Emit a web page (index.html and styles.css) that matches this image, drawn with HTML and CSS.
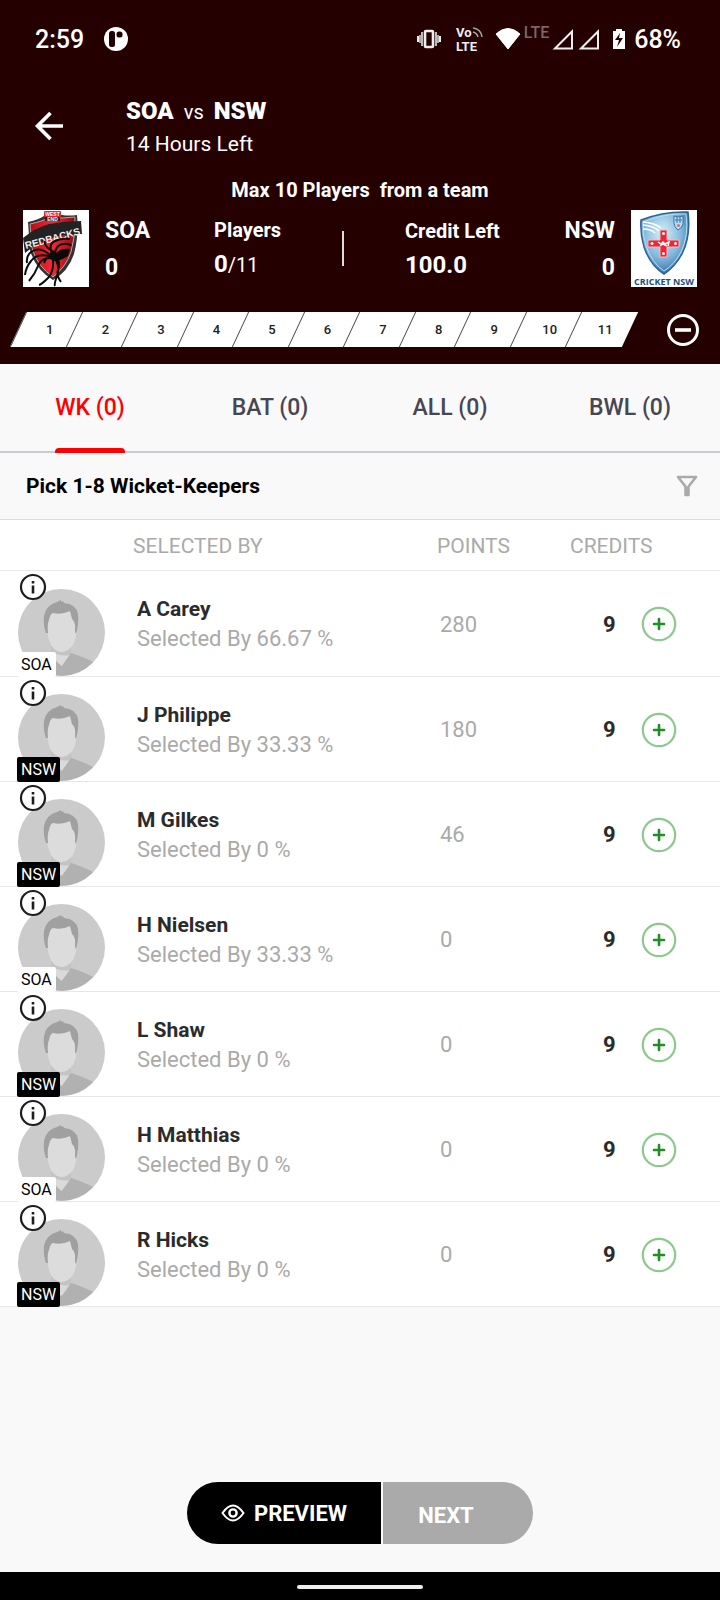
FILE: index.html
```
<!DOCTYPE html>
<html lang="en">
<head>
<meta charset="utf-8">
<meta name="viewport" content="width=device-width, initial-scale=1">
<title>SOA vs NSW</title>
<link rel="stylesheet" href="styles.css">
</head>
<body>
<svg class="sprite" aria-hidden="true">
  <symbol id="avatar" viewBox="0 0 87 87">
    <circle cx="43.500" cy="43.500" r="43.500" fill="#cbcbcb"/>
    <path d="M33 56h20v12l-9 12-11-13z" fill="#dadada"/>
    <path d="M33 57h20v9q-9 2-20-3z" fill="#c4c4c4"/>
    <path d="M33 65Q25 68 13 74.500A43.500 43.500 0 0 0 75 73Q66 68 53 64Q49 70 43.700 77Q36 71 33 65z" fill="#b1b1b1"/>
    <path d="M29 36Q29 21 43 21Q59 21 59 36Q59 48 55 56Q50 63 43.500 63Q37 63 33 56Q29 48 29 36z" fill="#dcdcdc"/>
    <path d="M28 44Q25 36 26 27Q28 16 39 13L43 11L43 13L45 12L46 14Q58 15 60 25Q61 34 58 45L57 43Q58 33 54 30L52 22Q44 26 35 24Q32 25 31 31Q29 35 30 44z" fill="#a0a0a0"/>
  </symbol>
  <symbol id="info" viewBox="0 0 28 28">
    <circle cx="14" cy="14" r="12" fill="#fff" stroke="#1d1d1d" stroke-width="2.200"/>
    <path d="M14 8v2.500M14 12.500v8" stroke="#1d1d1d" stroke-width="2.600"/>
  </symbol>
  <symbol id="add" viewBox="0 0 36 36">
    <circle cx="18" cy="18" r="16.200" fill="none" stroke="#8bc98d" stroke-width="2.200"/>
    <path d="M18 13v10M13 18h10" stroke="#1f8f24" stroke-width="2.600" stroke-linecap="round"/>
  </symbol>
</svg>

<header class="top">
  <div class="status">
    <span class="clock">2:59</span>
    <svg class="app-dot" width="26" height="26" viewBox="0 0 26 26"><circle cx="13" cy="13" r="12" fill="#fff"/><rect x="6" y="5" width="6" height="16" rx="2.500" fill="#250000"/><rect x="13.500" y="5.500" width="6" height="6" rx="2.500" fill="#250000"/></svg>
    <svg class="vibrate" width="26" height="22" viewBox="0 0 26 22"><rect x="9" y="3" width="8" height="16" rx="1" fill="none" stroke="#eee" stroke-width="2.600"/><path d="M6 4v14M20 4v14" stroke="#bbb" stroke-width="2"/><path d="M4 7v8M22 7v8" stroke="#aaa" stroke-width="2"/><path d="M2 8v6M24 8v6" stroke="#eee" stroke-width="2"/></svg>
    <svg class="volte" width="30" height="28" viewBox="0 0 30 28"><text x="1" y="12" class="net">Vo</text><text x="1" y="26" class="net">LTE</text><path d="M18 3q8 1 9 9M18 7q4 1 5 5" fill="none" stroke="#aaa" stroke-width="1.500"/></svg>
    <svg class="wifi" width="26" height="22" viewBox="0 0 26 22"><path d="M13 21L1 6q12-11 24 0z" fill="#fff" stroke="#fff" stroke-linejoin="round"/></svg>
    <span class="lte">LTE</span>
    <svg class="signal" width="50" height="24" viewBox="0 0 50 24"><path d="M4 21.500L21 4.500v17zM30 21.500L47 4.500v17z" fill="none" stroke="#eee" stroke-width="2"/></svg>
    <svg class="battery" width="14" height="22" viewBox="0 0 14 22"><path d="M1 3h3V1h6v2h3v18H1z" fill="#fff"/><path d="M8 5L3 12h4l-2 7 6-9H7z" fill="#250000"/></svg>
    <span class="percent">68%</span>
  </div>

  <div class="title-row">
    <button class="back" aria-label="Back"><svg width="30" height="30" viewBox="0 0 30 30"><path d="M29 15H4M16.500 2L3.500 15 16.500 28" fill="none" stroke="#fff" stroke-width="3.600"/></svg></button>
    <div>
      <h1 class="match"><b>SOA</b><span>vs</span><b>NSW</b></h1>
      <p class="left">14 Hours Left</p>
    </div>
  </div>

  <p class="limit">Max 10 Players&nbsp; from a team</p>

  <div class="summary">
    <svg class="crest" viewBox="0 0 66 77" role="img" aria-label="Redbacks">
      <defs><linearGradient id="red" x1="0" x2="1"><stop offset="0" stop-color="#b80d16"/><stop offset=".5" stop-color="#f22a35"/><stop offset="1" stop-color="#8f0a10"/></linearGradient></defs>
      <rect width="66" height="77" fill="#fff"/>
      <path d="M5 12Q18 9 22 5h17q7 1 15 0q2 20-3 39q-6 18-21 26Q12 59 7 40z" fill="#333"/>
      <path d="M7 14q14-3 20-7q12 2 25 0q1 18-4 35-5 15-18 25Q14 56 9 38z" fill="url(#red)" stroke="#aaa"/>
      <path d="M0 28Q12 18 26 14q16-3 32-3l1 13q-20 0-33 5T2 43z" fill="#222"/>
      <text x="3" y="39" class="crest-name" transform="rotate(-15 3 39)">REDBACKS</text>
      <rect x="21" y="1" width="17" height="6" rx="1" fill="#e31f2b"/><rect x="22" y="7" width="15" height="4" fill="#222"/>
      <text x="29.500" y="6" class="crest-tag">WEST</text><text x="29.500" y="11" class="crest-tag">END</text>
      <path d="M24 45q5-4 9-2q5-5 14-4l-2 7q-6 4-11 5q-6 1-10-6z" fill="#0a0a0a"/>
      <path d="M26 44Q16 36 8 42 3 46 4 53M26 46Q14 43 8 51 3 57 2 65M27 48Q18 48 15 56T6 71M30 50Q31 62 25 68T16 75M33 50Q37 58 34 66T32 76M35 49Q37 55 35 60T38 72M29 44Q25 34 32 31T47 29M32 43Q33 35 40 34T48 36M31 42Q20 36 22 31M23 49l-2 4" fill="none" stroke="#0a0a0a" stroke-width="2"/>
    </svg>
    <div class="team"><b>SOA</b><b>0</b></div>
    <div class="stat"><span class="stat-label">Players</span><span class="stat-value">0<small>/11</small></span></div>
    <i class="divider"></i>
    <div class="stat credit"><span class="stat-label">Credit Left</span><span class="stat-value">100.0</span></div>
    <div class="team away"><b>NSW</b><b>0</b></div>
    <svg class="crest" viewBox="0 0 66 77" role="img" aria-label="Cricket NSW">
      <defs><radialGradient id="sky" cx=".45" cy=".35" r=".7"><stop offset="0" stop-color="#d9f1f8"/><stop offset=".55" stop-color="#84b9dc"/><stop offset="1" stop-color="#2b68a8"/></radialGradient></defs>
      <rect width="66" height="77" fill="#fff"/>
      <path d="M10 10Q33 1 57 2 60 26 51 44 44 57 33 64 19 55 13 37 9 24 10 10z" fill="url(#sky)" stroke="#2d629b" stroke-width="1.500"/>
      <path d="M12 12Q34 3 55 4q3 22-5 38-7 13-17 19Q21 53 15 36q-4-12-3-24z" fill="none" stroke="#b6e2ee"/>
      <path d="M12 12q12 1 18 6M12 15q11 1 16 6M12 19q8 0 12 4" fill="none" stroke="#fff" stroke-width="1.600"/>
      <path d="M43 6q5 2 9 0v8q-1 4-5 6-4-3-4-7z" fill="#b8dded" stroke="#3b72ae"/><path d="M44 10h7M46 7v6M49 7v6" stroke="#3b72ae"/><circle cx="47.500" cy="15.500" r="1.600" fill="#e76a70"/>
      <path d="M29 20h7v10h12v7H36v10h-7V37H17v-7h12z" fill="#ec2736" stroke="#f7b9c1"/>
      <g fill="#fff"><circle cx="32.500" cy="23.500" r="1.500"/><circle cx="32.500" cy="43.500" r="1.500"/><circle cx="21" cy="33.500" r="1.500"/><circle cx="44.500" cy="33.500" r="1.500"/></g>
      <path d="M27 32l3 2 2-2 2 2 4-2-1 4M29 36l3-2 4 2" fill="none" stroke="#fff" stroke-width="1.500"/>
      <text x="33" y="75" class="crest-foot">CRICKET NSW</text>
    </svg>
  </div>

  <div class="progress">
    <ol class="steps"><li>1</li><li>2</li><li>3</li><li>4</li><li>5</li><li>6</li><li>7</li><li>8</li><li>9</li><li>10</li><li>11</li></ol>
    <button class="clear" aria-label="Clear team"><svg width="32" height="32" viewBox="0 0 32 32"><circle cx="16" cy="16" r="14.500" fill="none" stroke="#fff" stroke-width="3"/><path d="M8 16h16" stroke="#fff" stroke-width="3.600"/></svg></button>
  </div>
</header>

<nav class="tabs">
  <button class="tab active">WK (0)</button>
  <button class="tab">BAT (0)</button>
  <button class="tab">ALL (0)</button>
  <button class="tab">BWL (0)</button>
</nav>

<main>
  <div class="pick">
    <h2>Pick 1-8 Wicket-Keepers</h2>
    <button class="filter" aria-label="Filter"><svg width="22" height="22" viewBox="0 0 22 22"><path d="M2 2h18l-7.500 9.500V20h-3v-8.500z" fill="none" stroke="#aaa" stroke-width="2.600" stroke-linejoin="round"/><path d="M11 12v8" stroke="#aaa" stroke-width="3"/></svg></button>
  </div>

  <table class="players">
    <colgroup><col class="c-photo"><col class="c-name"><col class="c-points"><col class="c-credits"><col class="c-add"></colgroup>
    <thead><tr><td></td><th>SELECTED BY</th><th>POINTS</th><th colspan="2">CREDITS</th></tr></thead>
    <tbody>
      <tr>
        <td><div class="photo"><svg class="face"><use href="#avatar"/></svg><button class="info" aria-label="About A Carey"><svg><use href="#info"/></svg></button><span class="tag">SOA</span></div></td>
        <td><strong>A Carey</strong><span class="by">Selected By 66.67 %</span></td><td class="points">280</td><td class="credits">9</td>
        <td><button class="add" aria-label="Add A Carey"><svg><use href="#add"/></svg></button></td>
      </tr>
      <tr>
        <td><div class="photo"><svg class="face"><use href="#avatar"/></svg><button class="info" aria-label="About J Philippe"><svg><use href="#info"/></svg></button><span class="tag dark">NSW</span></div></td>
        <td><strong>J Philippe</strong><span class="by">Selected By 33.33 %</span></td><td class="points">180</td><td class="credits">9</td>
        <td><button class="add" aria-label="Add J Philippe"><svg><use href="#add"/></svg></button></td>
      </tr>
      <tr>
        <td><div class="photo"><svg class="face"><use href="#avatar"/></svg><button class="info" aria-label="About M Gilkes"><svg><use href="#info"/></svg></button><span class="tag dark">NSW</span></div></td>
        <td><strong>M Gilkes</strong><span class="by">Selected By 0 %</span></td><td class="points">46</td><td class="credits">9</td>
        <td><button class="add" aria-label="Add M Gilkes"><svg><use href="#add"/></svg></button></td>
      </tr>
      <tr>
        <td><div class="photo"><svg class="face"><use href="#avatar"/></svg><button class="info" aria-label="About H Nielsen"><svg><use href="#info"/></svg></button><span class="tag">SOA</span></div></td>
        <td><strong>H Nielsen</strong><span class="by">Selected By 33.33 %</span></td><td class="points">0</td><td class="credits">9</td>
        <td><button class="add" aria-label="Add H Nielsen"><svg><use href="#add"/></svg></button></td>
      </tr>
      <tr>
        <td><div class="photo"><svg class="face"><use href="#avatar"/></svg><button class="info" aria-label="About L Shaw"><svg><use href="#info"/></svg></button><span class="tag dark">NSW</span></div></td>
        <td><strong>L Shaw</strong><span class="by">Selected By 0 %</span></td><td class="points">0</td><td class="credits">9</td>
        <td><button class="add" aria-label="Add L Shaw"><svg><use href="#add"/></svg></button></td>
      </tr>
      <tr>
        <td><div class="photo"><svg class="face"><use href="#avatar"/></svg><button class="info" aria-label="About H Matthias"><svg><use href="#info"/></svg></button><span class="tag">SOA</span></div></td>
        <td><strong>H Matthias</strong><span class="by">Selected By 0 %</span></td><td class="points">0</td><td class="credits">9</td>
        <td><button class="add" aria-label="Add H Matthias"><svg><use href="#add"/></svg></button></td>
      </tr>
      <tr>
        <td><div class="photo"><svg class="face"><use href="#avatar"/></svg><button class="info" aria-label="About R Hicks"><svg><use href="#info"/></svg></button><span class="tag dark">NSW</span></div></td>
        <td><strong>R Hicks</strong><span class="by">Selected By 0 %</span></td><td class="points">0</td><td class="credits">9</td>
        <td><button class="add" aria-label="Add R Hicks"><svg><use href="#add"/></svg></button></td>
      </tr>
    </tbody>
  </table>
</main>

<div class="actions">
  <button class="preview"><svg width="24" height="18" viewBox="0 0 24 18"><path d="M1.500 9Q12-6 22.500 9 12 24 1.500 9z" fill="none" stroke="#fff" stroke-width="2"/><circle cx="12" cy="9" r="3.600" fill="none" stroke="#fff" stroke-width="2.400"/></svg>PREVIEW</button>
  <button class="next">NEXT</button>
</div>
<footer class="gesture"><i></i></footer>
</body>
</html>
```
FILE: styles.css
```
* { box-sizing: border-box; }
body {
  margin: 0;
  min-height: 100vh;
  display: flex;
  flex-direction: column;
  background: #f9f9f9;
  color: #2b2b2b;
  font-family: Roboto, "Liberation Sans", sans-serif;
  font-size: 22px;
}
button { border: 0; padding: 0; background: none; color: inherit; font: inherit; }
svg { display: block; }
h1, h2, p, ol { margin: 0; padding: 0; }
.sprite { position: absolute; width: 0; height: 0; }

.top { background: #250000; color: #fff; padding-bottom: 17px; }
.status { display: flex; align-items: center; height: 78px; padding: 0 39px 0 35px; font-size: 25px; font-weight: 500; }
.app-dot { margin-left: 19px; margin-right: auto; }
.volte { margin-left: 13px; }
.net { font-size: 13px; font-weight: 700; fill: #eee; }
.wifi { margin-left: 10px; }
.lte { align-self: flex-start; margin: 24px 2px 0 3px; font-size: 16px; line-height: 18px; color: #7c6666; }
.battery { margin: 0 8px 0 11px; }

.title-row { display: flex; align-items: center; height: 96px; padding: 0 34px; gap: 62px; }
.match { display: flex; align-items: baseline; gap: 10px; padding-top: 2px; font-size: 24px; line-height: 32px; font-weight: 700; }
.match span { font-size: 20px; font-weight: 400; }
.left { font-size: 21px; line-height: 32px; }
.limit { text-align: center; font-size: 20px; line-height: 32px; font-weight: 700; }

.summary { display: grid; grid-template-columns: 66px 93fr 112fr 2px 148fr 91fr 66px; column-gap: 16px; align-items: center; padding: 4px 23px 0; }
.crest { width: 66px; height: 77px; }
.crest-name { font: 700 10px "Liberation Sans", sans-serif; fill: #eee; }
.crest-tag { font: 700 5px "Liberation Sans", sans-serif; fill: #fff; text-anchor: middle; }
.crest-foot { font: 700 9px "Open Sans", sans-serif; fill: #234c86; text-anchor: middle; }
.team { display: flex; flex-direction: column; font-size: 23px; line-height: 37px; }
.away { text-align: right; }
.stat { display: flex; flex-direction: column; line-height: 36px; font-weight: 700; white-space: nowrap; }
.credit { padding-left: 45px; }
.stat-label { font-size: 20px; line-height: 32px; }
.stat-value { font-size: 24px; }
.stat-value small { font-size: 20px; font-weight: 400; }
.divider { height: 35px; background: #ddd; }

.progress { display: flex; align-items: center; justify-content: space-between; padding: 25px 21px 0 18px; }
.steps { display: flex; flex: 1; margin-right: 38px; list-style: none; }
.steps li { position: relative; z-index: 0; flex: 1; padding-left: 8px; text-align: center; font-size: 13px; line-height: 35px; font-weight: 500; color: #222; }
.steps li::before { content: ""; position: absolute; z-index: -1; inset: 0 -1px 0 0; background: #fff; border-left: 1px solid #444; transform: skewX(-25deg); }

.tabs { display: flex; border-bottom: 2px solid #cac8d2; }
.tab { position: relative; flex: 1; height: 87px; font-size: 23px; font-weight: 500; color: #484650; }
.active { color: #f00; }
.active::after { content: ""; position: absolute; left: 55px; right: 55px; bottom: -2px; height: 5px; border-radius: 4px 4px 0 0; background: #f00; }

.pick { display: flex; align-items: center; justify-content: space-between; height: 67px; padding: 0 22px 0 26px; border-bottom: 1px solid #ddd; }
.pick h2 { font-size: 21px; font-weight: 700; color: #000; }

.players { width: 100%; table-layout: fixed; border-collapse: collapse; background: #fff; }
.players td, .players th { padding: 2px 0 0; text-align: left; border-bottom: 1px solid #e6e6e6; }
.players th { height: 50px; font-size: 21px; font-weight: 400; color: #aaa; }
.c-photo { width: 133px; }
.c-points { width: 133px; }
.c-credits { width: 71px; }
.c-add { width: 79px; }
.players td:first-child { padding: 0; }
.photo { position: relative; height: 104px; padding: 17px 0 0 18px; }
.players tbody tr:first-child .photo { height: 105px; padding-top: 18px; }
.face { width: 87px; height: 87px; }
.info, .info svg { width: 28px; height: 28px; }
.info { position: absolute; left: 19px; top: 2px; }
.tag { position: absolute; left: 17px; bottom: -1px; padding: 0 4px; border-radius: 2px; background: #fff; color: #000; font-size: 16px; line-height: 25px; }
.dark { background: #000; color: #fff; }
.players strong, .by { display: block; padding-left: 4px; line-height: 29px; }
.players strong { font-size: 21px; font-weight: 700; }
.by { color: #aaa; }
.players .points { padding-left: 3px; color: #aaa; }
.players .credits { padding-left: 33px; font-weight: 700; }
.add, .add svg { display: block; width: 36px; height: 36px; }

.actions { display: grid; grid-template-columns: 194fr 150fr; align-self: center; gap: 2px; width: 346px; height: 62px; margin: auto 0 28px; border-radius: 31px; overflow: hidden; color: #fff; font-weight: 700; }
.preview { display: flex; align-items: center; justify-content: center; gap: 9px; background: #000; }
.next { padding: 4px 24px 0 0; background: #aaa; }
.gesture { display: flex; align-items: center; justify-content: center; height: 28px; padding-top: 2px; background: #000; }
.gesture i { width: 126px; height: 4px; border-radius: 2px; background: #eee; }
```
